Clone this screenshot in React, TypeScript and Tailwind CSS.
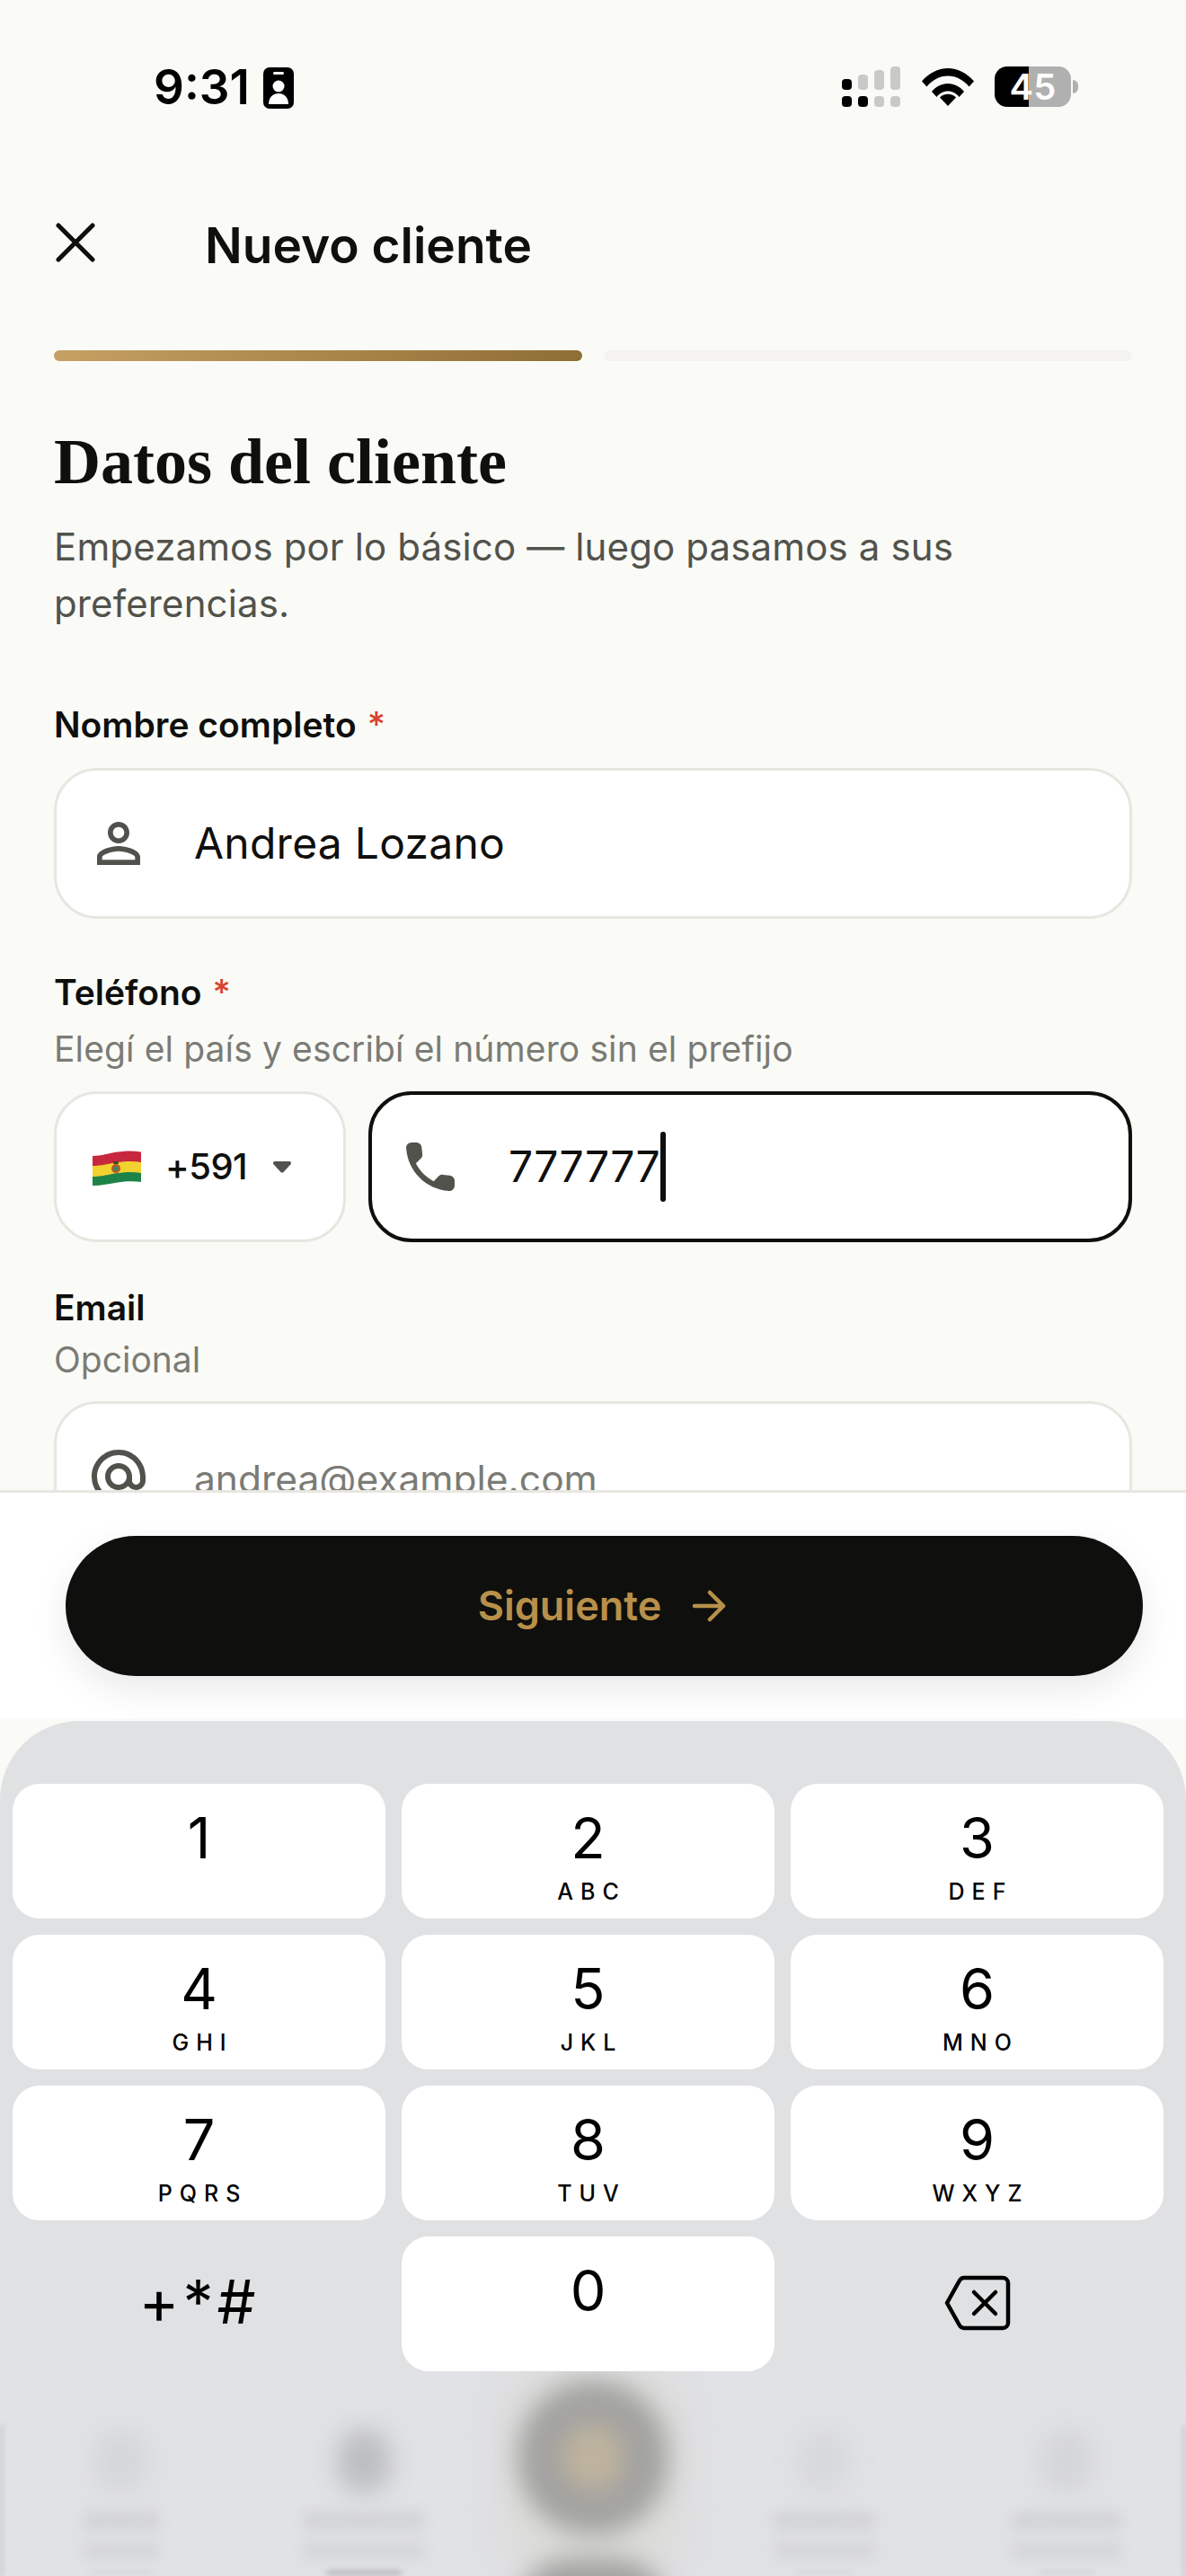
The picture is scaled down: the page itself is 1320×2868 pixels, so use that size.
import React from 'react';

const inter = "font-['Inter',sans-serif]";

const keys = [
  { digit: '1', letters: '' },
  { digit: '2', letters: 'ABC' },
  { digit: '3', letters: 'DEF' },
  { digit: '4', letters: 'GHI' },
  { digit: '5', letters: 'JKL' },
  { digit: '6', letters: 'MNO' },
  { digit: '7', letters: 'PQRS' },
  { digit: '8', letters: 'TUV' },
  { digit: '9', letters: 'WXYZ' },
];

const Key: React.FC<{ digit: string; letters: string }> = ({ digit, letters }) => (
  <div className="flex h-[150px] flex-col items-center rounded-[30px] bg-white pt-[22px] text-black">
    <span className="h-[76px] text-[63px] leading-[76px]">{digit}</span>
    {letters && <span className="mt-[7px] pl-[8px] text-[25px] leading-[30px] font-medium tracking-[8px]">{letters}</span>}
  </div>
);

const Field: React.FC<{ className?: string; children: React.ReactNode }> = ({ className = '', children }) => (
  <div className={`flex h-[168px] items-center rounded-[48px] border-[3px] border-[#E8E6E0] bg-white ${className}`}>
    {children}
  </div>
);

const Label: React.FC<{ text: string; required?: boolean; className?: string }> = ({ text, required, className = '' }) => (
  <div className={`text-[39px] leading-[48px] font-semibold text-[#0F0F0D] ${className}`}>
    {text}
    {required && <span className="ml-[12px] font-medium text-[#D9432F]">*</span>}
  </div>
);

const StatusBar = () => (
  <div className="flex h-[180px] shrink-0 items-start pt-[66px] pl-[171px]">
    <span className="text-[53px] leading-[62px] font-semibold text-black">9:31</span>
    <svg className="mt-[9px] ml-[15px]" width="34" height="46" viewBox="0 0 34 46">
      <rect width="34" height="46" rx="7" fill="#000" />
      <rect x="11" y="5" width="12" height="3" rx="1.5" fill="#fff" />
      <circle cx="17" cy="21" r="6.5" fill="#fff" />
      <path d="M6 41c0-8 5-12 11-12s11 4 11 12z" fill="#fff" />
    </svg>
    <svg className="mt-[8px] ml-[610px]" width="66" height="46" viewBox="0 0 66 46">
      <rect x="0" y="14" width="11" height="12" rx="4" fill="#000" />
      <rect x="18" y="9" width="11" height="17" rx="4" fill="#C9C9C9" />
      <rect x="36" y="4" width="11" height="22" rx="4" fill="#C9C9C9" />
      <rect x="54" y="0" width="11" height="26" rx="4" fill="#C9C9C9" />
      <rect x="0" y="33" width="11" height="12" rx="4" fill="#000" />
      <rect x="18" y="33" width="11" height="12" rx="4" fill="#000" />
      <rect x="36" y="33" width="11" height="12" rx="4" fill="#C9C9C9" />
      <rect x="54" y="33" width="11" height="12" rx="4" fill="#C9C9C9" />
    </svg>
    <svg className="mt-[10px] ml-[23px]" width="58" height="42" viewBox="0 0 58 42">
      <path d="M0 14.5C7.5 5.5 18 0 29 0s21.500 5.500 29 14.500l-5.500 6C46.500 13 38 8.500 29 8.500S11.500 13 5.500 20.500z" fill="#000" />
      <path d="M11 26C15.500 20.500 22 17 29 17s13.500 3.500 18 9l-5.500 6C38.500 28 34 25.500 29 25.500S19.500 28 16.500 32z" fill="#000" />
      <path d="M29 42l-9-9.500c2.400-2.400 5.500-3.700 9-3.700s6.600 1.300 9 3.700z" fill="#000" />
    </svg>
    <div className="mt-[8px] ml-[23px] flex items-center">
      <div className="flex h-[45px] w-[85px] items-center justify-center rounded-[14px] bg-[linear-gradient(90deg,#000_45%,#B0B0B0_45%)] text-[40px] leading-[45px] font-semibold text-white">
        45
      </div>
      <div className="ml-[2px] h-[15px] w-[6px] rounded-r-[6px] bg-[#B0B0B0]" />
    </div>
  </div>
);

const FlagBolivia = () => (
  <svg className="mt-[2px]" width="54" height="39" viewBox="0 0 54 39">
    <path d="M0 6C10 6 18 3 28 1.500C38 0 46 0 54 1.500V14C46 12.500 38 12.500 28 14C18 15.500 10 18 0 18z" fill="#C8283E" />
    <path d="M0 17C10 17 18 14.500 28 13C38 11.500 46 11.500 54 13V26C46 24.500 38 24.500 28 26C18 27.500 10 30 0 30z" fill="#F2D22E" />
    <path d="M0 29C10 29 18 26.500 28 25C38 23.500 46 23.500 54 25V35C46 34 38 34 28 35.500C18 37 10 39 0 39z" fill="#1E8348" />
    <circle cx="26" cy="20" r="5" fill="#B9572B" />
    <circle cx="26" cy="20" r="2.500" fill="#2F8F6B" />
    <rect x="23" y="12" width="6" height="3" rx="1" fill="#4A4A2A" />
  </svg>
);

const BlurItem: React.FC<{ width: string; block: string; text: string; line: string }> = ({ width, block, text, line }) => (
  <div className={`flex shrink-0 flex-col items-center pt-[64px] ${width}`}>
    <div className={`h-[72px] w-[60px] rounded-full blur-[14px] ${block}`} />
    <div className={`mt-[20px] flex h-[54px] flex-col justify-between blur-[7px] ${text}`}>
      <div className="h-[22px] bg-[#D3D4D7]" />
      <div className="h-[20px] bg-[#D5D6D9]" />
    </div>
    <div className={`mt-[12px] h-[5px] rounded-full blur-[3px] ${line}`} />
  </div>
);

export default function App() {
  return (
    <div className={`flex h-[2868px] w-[1320px] flex-col overflow-hidden bg-[#FAFBF7] ${inter}`}>
      <StatusBar />

      <div className="flex h-[180px] shrink-0 items-center">
        <svg className="ml-[60px]" width="48" height="48" viewBox="0 0 48 48" fill="none" stroke="#0F0F0D" strokeWidth="5" strokeLinecap="round">
          <path d="M5 5l38 38M43 5L5 43" />
        </svg>
        <h1 className="mt-[5px] ml-[120px] text-[55px] leading-[64px] font-semibold text-[#0F0F0D]">Nuevo cliente</h1>
      </div>

      <div className="mt-[30px] flex shrink-0 gap-[24px] px-[60px]">
        <div className="h-[12px] flex-1 rounded-full bg-gradient-to-r from-[#C6A063] to-[#8F6E33]" />
        <div className="h-[12px] flex-1 rounded-full bg-[#F4F3EF]" />
      </div>

      <div className="min-h-0 flex-1 overflow-hidden px-[60px]">
        <h2 className="mt-[70px] font-['Liberation_Serif',serif] text-[72px] leading-[84px] font-bold text-[#0F0F0D]">Datos del cliente</h2>
        <p className="mt-[21px] text-[42px] leading-[63px] tracking-[0.13px] text-[#52524C]">
          Empezamos por lo básico — luego pasamos a sus preferencias.
        </p>

        <Label text="Nombre completo" required className="mt-[80px]" />
        <Field className="mt-[24px]">
          <svg className="ml-[33px]" width="72" height="72" viewBox="0 0 24 24" fill="#52524C">
            <path d="M12 5.900c1.160 0 2.100.94 2.100 2.100s-.94 2.100-2.100 2.100S9.900 9.160 9.900 8s.94-2.100 2.100-2.100m0 9c2.970 0 6.100 1.460 6.100 2.100v1.100H5.900V17c0-.64 3.130-2.100 6.100-2.100M12 4C9.790 4 8 5.790 8 8s1.790 4 4 4 4-1.790 4-4-1.790-4-4-4zm0 9c-2.670 0-8 1.340-8 4v3h16v-3c0-2.660-5.330-4-8-4z" />
          </svg>
          <span className="ml-[48px] text-[48px] tracking-[0.25px] text-[#0F0F0D]">Andrea Lozano</span>
        </Field>

        <Label text="Teléfono" required className="mt-[58px]" />
        <div className="mt-[15px] text-[39px] leading-[48px] tracking-[0.12px] text-[#7B7B75]">Elegí el país y escribí el número sin el prefijo</div>
        <div className="mt-[23px] flex gap-[25px]">
          <Field className="w-[325px] shrink-0 pl-[40px]">
            <FlagBolivia />
            <span className="ml-[27px] text-[40px] font-medium tracking-[-0.5px] text-[#0F0F0D]">+591</span>
            <svg className="ml-[29px]" width="20" height="13" viewBox="0 0 20 13" fill="#52524C">
              <path d="M2 0h16c2 0 2.500 2 1.500 3.200L11.500 12c-.8.8-2.200.8-3 0L.5 3.200C-.5 2 0 0 2 0z" />
            </svg>
          </Field>
          <div className="flex h-[168px] flex-1 items-center rounded-[48px] border-[4.5px] border-[#0F0F0D] bg-white">
            <svg className="ml-[29px]" width="72" height="72" viewBox="0 0 24 24" fill="#52524C">
              <path d="M19.230 15.260l-2.540-.29c-.61-.07-1.210.14-1.640.57l-1.840 1.840c-2.830-1.440-5.150-3.750-6.590-6.590l1.850-1.850c.43-.43.64-1.030.57-1.640l-.29-2.520c-.07-1.010-.92-1.770-1.990-1.770H5.030c-1.130 0-2.070.94-2 2.070.53 8.540 7.360 15.360 15.890 15.890 1.130.07 2.070-.87 2.070-2v-1.730c.01-1.010-.75-1.860-1.760-1.980z" />
            </svg>
            <span className="ml-[51px] text-[48px] tracking-[0.2px] text-[#0F0F0D]">777777</span>
            <div className="h-[78px] w-[6px] rounded-full bg-[#0F0F0D]" />
          </div>
        </div>

        <Label text="Email" className="mt-[49px]" />
        <div className="mt-[10px] text-[39px] leading-[48px] text-[#7B7B75]">Opcional</div>
        <Field className="mt-[22px]">
          <svg className="ml-[33px]" width="72" height="72" viewBox="0 0 24 24" fill="#52524C">
            <path d="M12 2C6.480 2 2 6.480 2 12s4.480 10 10 10h5v-2h-5c-4.340 0-8-3.660-8-8s3.660-8 8-8 8 3.660 8 8v1.430c0 .79-.71 1.570-1.500 1.570s-1.500-.78-1.500-1.570V12c0-2.760-2.240-5-5-5s-5 2.240-5 5 2.240 5 5 5c1.380 0 2.640-.56 3.540-1.470.65.89 1.770 1.470 2.960 1.470 1.970 0 3.500-1.600 3.500-3.570V12c0-5.520-4.480-10-10-10zm0 13c-1.660 0-3-1.340-3-3s1.340-3 3-3 3 1.340 3 3-1.340 3-3 3z" />
          </svg>
          <span className="ml-[48px] pt-[5px] text-[42.5px] text-[#7B7B75]">andrea@example.com</span>
        </Field>
      </div>

      <div className="h-[254px] shrink-0 border-t-[3px] border-[#E8E6E0] bg-white pt-[48px] pr-[48px] pl-[73px]">
        <div className="flex h-[156px] items-center justify-center rounded-full bg-[#0F0F0D] pr-[5px] text-[45px] font-semibold text-[#B8904A] shadow-[0_14px_40px_rgba(0,0,0,0.09)]">
          Siguiente
          <svg className="ml-[34px]" width="38" height="36" viewBox="0 0 38 36" fill="none" stroke="#B8904A" strokeWidth="4.500" strokeLinecap="round" strokeLinejoin="round">
            <path d="M3 18h32M20 3l15 15-15 15" />
          </svg>
        </div>
      </div>

      <div className="mt-[3px] flex h-[952px] shrink-0 flex-col overflow-hidden rounded-t-[88px] bg-[#E0E1E3]">
        <div className="relative z-10 grid shrink-0 grid-cols-[415px_415px_415px] gap-[18px] pt-[70px] pl-[14px]">
          {keys.map((k) => (
            <Key key={k.digit} digit={k.digit} letters={k.letters} />
          ))}
          <div className="flex h-[150px] items-center justify-center pb-[6px] text-[68px] leading-none tracking-[4px] text-black">+*#</div>
          <Key digit="0" letters="" />
          <div className="flex h-[150px] items-center justify-center pb-[2px]">
            <svg width="74" height="62" viewBox="0 0 74 62" fill="none" stroke="#000" strokeWidth="4.500" strokeLinecap="round" strokeLinejoin="round">
              <path d="M22 3h43a6 6 0 0 1 6 6v44a6 6 0 0 1-6 6H22a6 6 0 0 1-5-3L3 31 17 6a6 6 0 0 1 5-3z" />
              <path d="M33 19l24 24M57 19L33 43" />
            </svg>
          </div>
        </div>

        <div className="relative flex min-h-0 flex-1 bg-[#E1E2E6]">
          <div className="absolute top-[60px] bottom-0 left-0 w-[4px] bg-[#CDCED1] blur-[2px]" />
          <div className="absolute top-[60px] right-0 bottom-0 w-[4px] bg-[#CDCED1] blur-[2px]" />
          <BlurItem width="w-[270px]" block="bg-[#D5D6D9]" text="w-[84px]" line="w-[68px] bg-[#D5D6D9]" />
          <BlurItem width="w-[269px]" block="bg-[#BCBDC1]" text="w-[135px]" line="w-[84px] bg-[#B0B1B5]" />
          <div className="relative w-[242px] shrink-0">
            <div className="absolute inset-x-[10px] top-[-20px] bottom-[-20px] rounded-[80px] bg-[#DCDCDA] blur-[24px]" />
            <div className="relative flex flex-col items-center blur-[14px]">
              <div className="mt-[10px] flex h-[172px] w-[168px] shrink-0 items-center justify-center rounded-full bg-[#A2A2A1]">
                <div className="h-[76px] w-[70px] rounded-full bg-[#BEB39E]" />
              </div>
              <div className="mt-[26px] h-[60px] w-[168px] shrink-0 rounded-t-full bg-[#A2A2A1]" />
            </div>
          </div>
          <BlurItem width="w-[272px]" block="bg-[#D7D8DB]" text="w-[113px]" line="w-[60px] bg-[#D5D6D9]" />
          <BlurItem width="w-[267px]" block="bg-[#D4D5D8]" text="w-[122px]" line="w-[60px] bg-[#D3D4D7]" />
        </div>
      </div>
    </div>
  );
}
